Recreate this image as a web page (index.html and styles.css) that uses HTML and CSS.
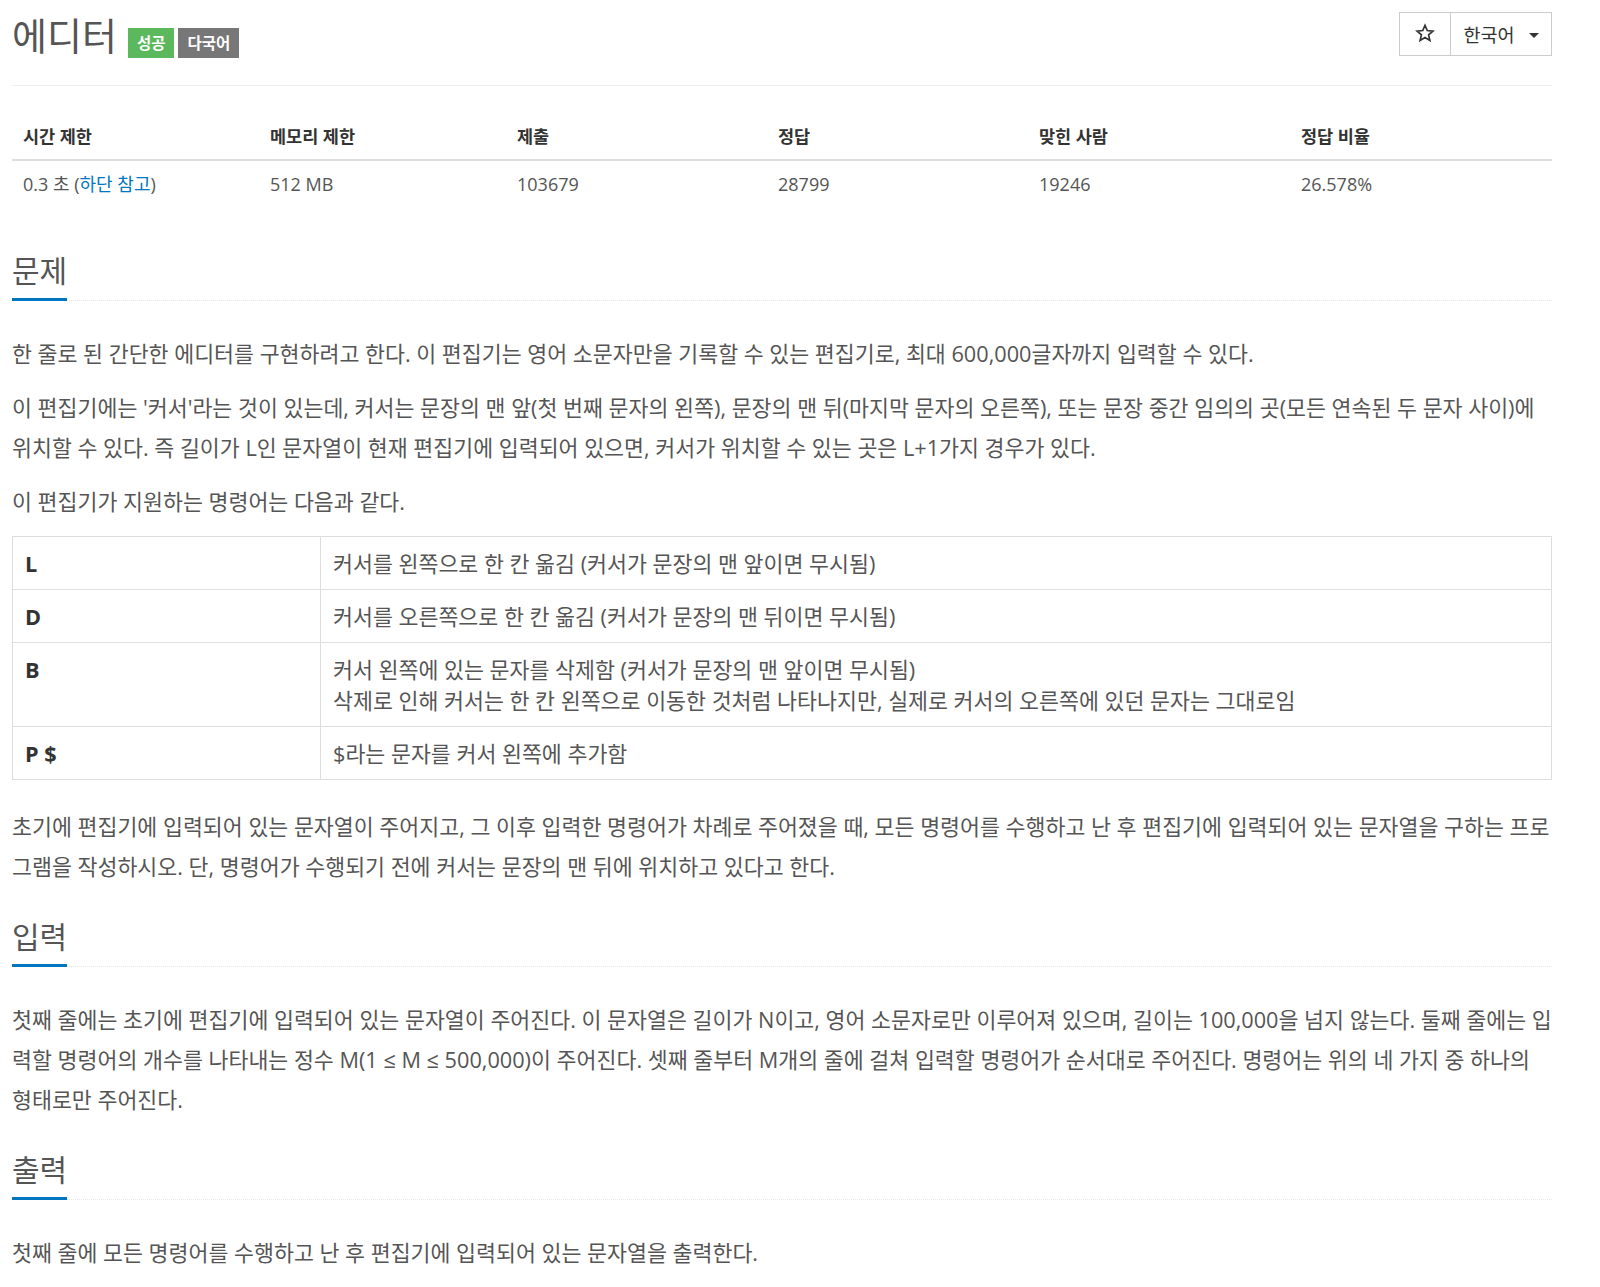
FILE: index.html
```html
<!DOCTYPE html>
<html lang="ko">
<head>
<meta charset="utf-8">
<title>에디터</title>
<link rel="stylesheet" href="styles.css">
</head>
<body>
<div class="container">
  <div class="page-header">
    <h1 class="title">
      <span class="title-text">에디터</span>
      <span class="label label-success">성공</span><span class="label label-gray">다국어</span>
    </h1>
    <div class="btn-group">
      <span class="btn btn-star"><svg width="20" height="20" viewBox="0 0 24 24"><path d="M12 2.8l2.7 6.3 6.8.6-5.2 4.5 1.6 6.7L12 17.3l-5.9 3.6 1.6-6.7-5.2-4.5 6.8-.6z" fill="none" stroke="#333" stroke-width="2" stroke-linejoin="miter"/></svg></span>
      <span class="btn btn-lang">한국어 <span class="caret"></span></span>
    </div>
  </div>

  <table class="info">
    <thead>
      <tr>
        <th class="c1">시간 제한</th>
        <th class="c2">메모리 제한</th>
        <th class="c3">제출</th>
        <th class="c4">정답</th>
        <th class="c5">맞힌 사람</th>
        <th class="c6">정답 비율</th>
      </tr>
    </thead>
    <tbody>
      <tr>
        <td>0.3 초 (<a href="#" class="link">하단 참고</a>)</td>
        <td>512 MB</td>
        <td>103679</td>
        <td>28799</td>
        <td>19246</td>
        <td>26.578%</td>
      </tr>
    </tbody>
  </table>

  <section class="section first">
    <div class="headline"><h2>문제</h2></div>
    <div class="problem-text">
      <p>한 줄로 된 간단한 에디터를 구현하려고 한다. 이 편집기는 영어 소문자만을 기록할 수 있는 편집기로, 최대 600,000글자까지 입력할 수 있다.</p>
      <p>이 편집기에는 '커서'라는 것이 있는데, 커서는 문장의 맨 앞(첫 번째 문자의 왼쪽), 문장의 맨 뒤(마지막 문자의 오른쪽), 또는 문장 중간 임의의 곳(모든 연속된 두 문자 사이)에 위치할 수 있다. 즉 길이가 L인 문자열이 현재 편집기에 입력되어 있으면, 커서가 위치할 수 있는 곳은 L+1가지 경우가 있다.</p>
      <p>이 편집기가 지원하는 명령어는 다음과 같다.</p>
      <table class="cmd">
        <tbody>
          <tr><th>L</th><td>커서를 왼쪽으로 한 칸 옮김 (커서가 문장의 맨 앞이면 무시됨)</td></tr>
          <tr><th>D</th><td>커서를 오른쪽으로 한 칸 옮김 (커서가 문장의 맨 뒤이면 무시됨)</td></tr>
          <tr><th>B</th><td>커서 왼쪽에 있는 문자를 삭제함 (커서가 문장의 맨 앞이면 무시됨)<br>삭제로 인해 커서는 한 칸 왼쪽으로 이동한 것처럼 나타나지만, 실제로 커서의 오른쪽에 있던 문자는 그대로임</td></tr>
          <tr><th>P $</th><td>$라는 문자를 커서 왼쪽에 추가함</td></tr>
        </tbody>
      </table>
      <p>초기에 편집기에 입력되어 있는 문자열이 주어지고, 그 이후 입력한 명령어가 차례로 주어졌을 때, 모든 명령어를 수행하고 난 후 편집기에 입력되어 있는 문자열을 구하는 프로그램을 작성하시오. 단, 명령어가 수행되기 전에 커서는 문장의 맨 뒤에 위치하고 있다고 한다.</p>
    </div>
  </section>

  <section class="section">
    <div class="headline"><h2>입력</h2></div>
    <div class="problem-text">
      <p>첫째 줄에는 초기에 편집기에 입력되어 있는 문자열이 주어진다. 이 문자열은 길이가 N이고, 영어 소문자로만 이루어져 있으며, 길이는 100,000을 넘지 않는다. 둘째 줄에는 입력할 명령어의 개수를 나타내는 정수 M(1 ≤ M ≤ 500,000)이 주어진다. 셋째 줄부터 M개의 줄에 걸쳐 입력할 명령어가 순서대로 주어진다. 명령어는 위의 네 가지 중 하나의 형태로만 주어진다.</p>
    </div>
  </section>

  <section class="section">
    <div class="headline"><h2>출력</h2></div>
    <div class="problem-text">
      <p>첫째 줄에 모든 명령어를 수행하고 난 후 편집기에 입력되어 있는 문자열을 출력한다.</p>
    </div>
  </section>
</div>
</body>
</html>
```
FILE: styles.css
```css
* { box-sizing: border-box; }
html, body {
  margin: 0;
  padding: 0;
  background: #fff;
}
body {
  font-family: "Open Sans", "Noto Sans CJK KR", sans-serif;
  color: #555;
  font-size: 16px;
}
.container {
  width: 1540px;
  margin-left: 12px;
}
.page-header {
  display: flex;
  justify-content: space-between;
  align-items: flex-start;
  border-bottom: 1px solid #eee;
  height: 86px;
}
.title {
  margin: 0;
  padding-top: 11px;
  font-weight: 400;
  font-size: 38px;
  line-height: 48px;
  color: #555;
  display: flex;
  align-items: center;
}
.title-text {
  margin-right: 11px;
}
.label {
  display: inline-block;
  color: #fff;
  font-size: 15.5px;
  font-weight: 700;
  line-height: 30px;
  height: 30px;
  padding: 0 9px;
  margin-top: 16px;
}
.label-success { background: #5cb85c; margin-right: 4px; }
.label-gray { background: #777; }
.btn-group {
  display: flex;
  margin-top: 12px;
  border: 1px solid #ccc;
  height: 44px;
}
.btn {
  display: flex;
  align-items: center;
  justify-content: center;
  color: #333;
  height: 42px;
  font-size: 18.5px;
}
.btn-star {
  width: 51px;
  border-right: 1px solid #ccc;
  padding-bottom: 3px;
}
.btn-lang {
  width: 100px;
  padding-left: 0;
}
.caret {
  display: inline-block;
  width: 0;
  height: 0;
  margin-left: 14px;
  margin-top: 3px;
  border-top: 5px solid #333;
  border-left: 5px solid transparent;
  border-right: 5px solid transparent;
}

.info {
  width: 100%;
  border-collapse: collapse;
  margin-top: 29px;
  font-size: 17.5px;
}
.info th {
  text-align: left;
  font-weight: 700;
  color: #333;
  line-height: 22px;
  padding: 10px 11px 12px;
  border-bottom: 2px solid #ddd;
}
.info td {
  line-height: 22px;
  padding: 12px 11px;
  font-size: 18px;
}
.info .c1 { width: 247px; }
.info .c2 { width: 247px; }
.info .c3 { width: 261px; }
.info .c4 { width: 261px; }
.info .c5 { width: 262px; }
.link { color: #0076c0; text-decoration: none; }

.section { margin-top: 34px; }
.section.first { margin-top: 48px; }
.headline {
  border-bottom: 1px dotted #e4e9f0;
  margin-bottom: 33px;
  height: 46px;
}
.headline h2 {
  display: inline-block;
  margin: 0;
  font-size: 30px;
  font-weight: 400;
  line-height: 32px;
  color: #555;
  padding-bottom: 11px;
  border-bottom: 3px solid #0076c0;
}
.problem-text {
  font-size: 21.7px;
  line-height: 40px;
}
.problem-text p {
  margin: 0 0 14px;
}
.problem-text p:last-child { margin-bottom: 0; }
.cmd {
  width: 100%;
  border-collapse: collapse;
  margin: 13px 0 27px;
  line-height: 31px;
}
.cmd th, .cmd td {
  border: 1px solid #ddd;
  padding: 10.5px 12px;
  vertical-align: top;
  text-align: left;
}
.cmd th {
  width: 308px;
  font-weight: 700;
  color: #333;
}
```
